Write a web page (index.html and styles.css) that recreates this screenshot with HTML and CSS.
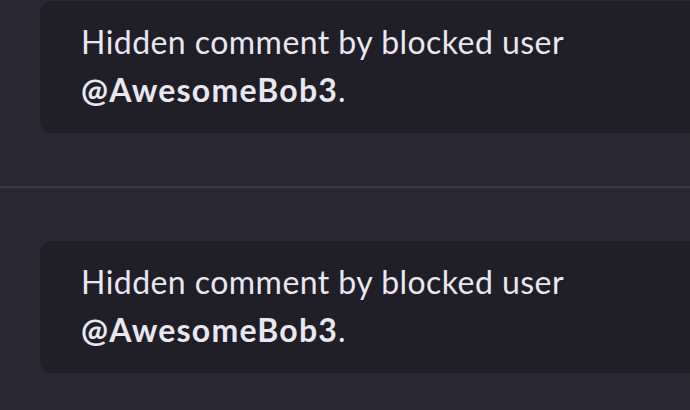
FILE: index.html
```html
<!DOCTYPE html>
<html lang="en">
<head>
<meta charset="utf-8">
<link rel="stylesheet" href="styles.css">
</head>
<body>
<div class="thread">
  <section class="entry">
    <div class="hidden-card">
      <p class="hidden-text">Hidden comment by blocked user <strong>@AwesomeBob3</strong>.</p>
    </div>
  </section>
  <hr class="divider">
  <section class="entry">
    <div class="hidden-card">
      <p class="hidden-text">Hidden comment by blocked user <strong>@AwesomeBob3</strong>.</p>
    </div>
  </section>
</div>
</body>
</html>
```
FILE: styles.css
```css
html, body {
  margin: 0;
  padding: 0;
  background: #2a2832;
  overflow: hidden;
  width: 690px;
  height: 410px;
}
.thread {
  display: flex;
  flex-direction: column;
  padding-top: 1px;
}
.entry {
  padding-left: 40px;
}
.entry + .divider + .entry {
  padding-top: 53px;
}
.hidden-card {
  background: #201e27;
  border-radius: 12px 0 0 12px;
  padding: 17px 0 19px 41px;
  box-sizing: border-box;
  height: 132px;
}
.hidden-text {
  margin: 0;
  font-family: Lato, "Noto Sans", sans-serif;
  font-size: 32px;
  line-height: 48px;
  letter-spacing: 0.45px;
  color: #e9e7f1;
}
.hidden-text strong {
  font-weight: 700;
  letter-spacing: 1.2px;
}
.divider {
  margin: 53px 0 0 0;
  border: 0;
  height: 2px;
  background: #3c3a43;
}
```
